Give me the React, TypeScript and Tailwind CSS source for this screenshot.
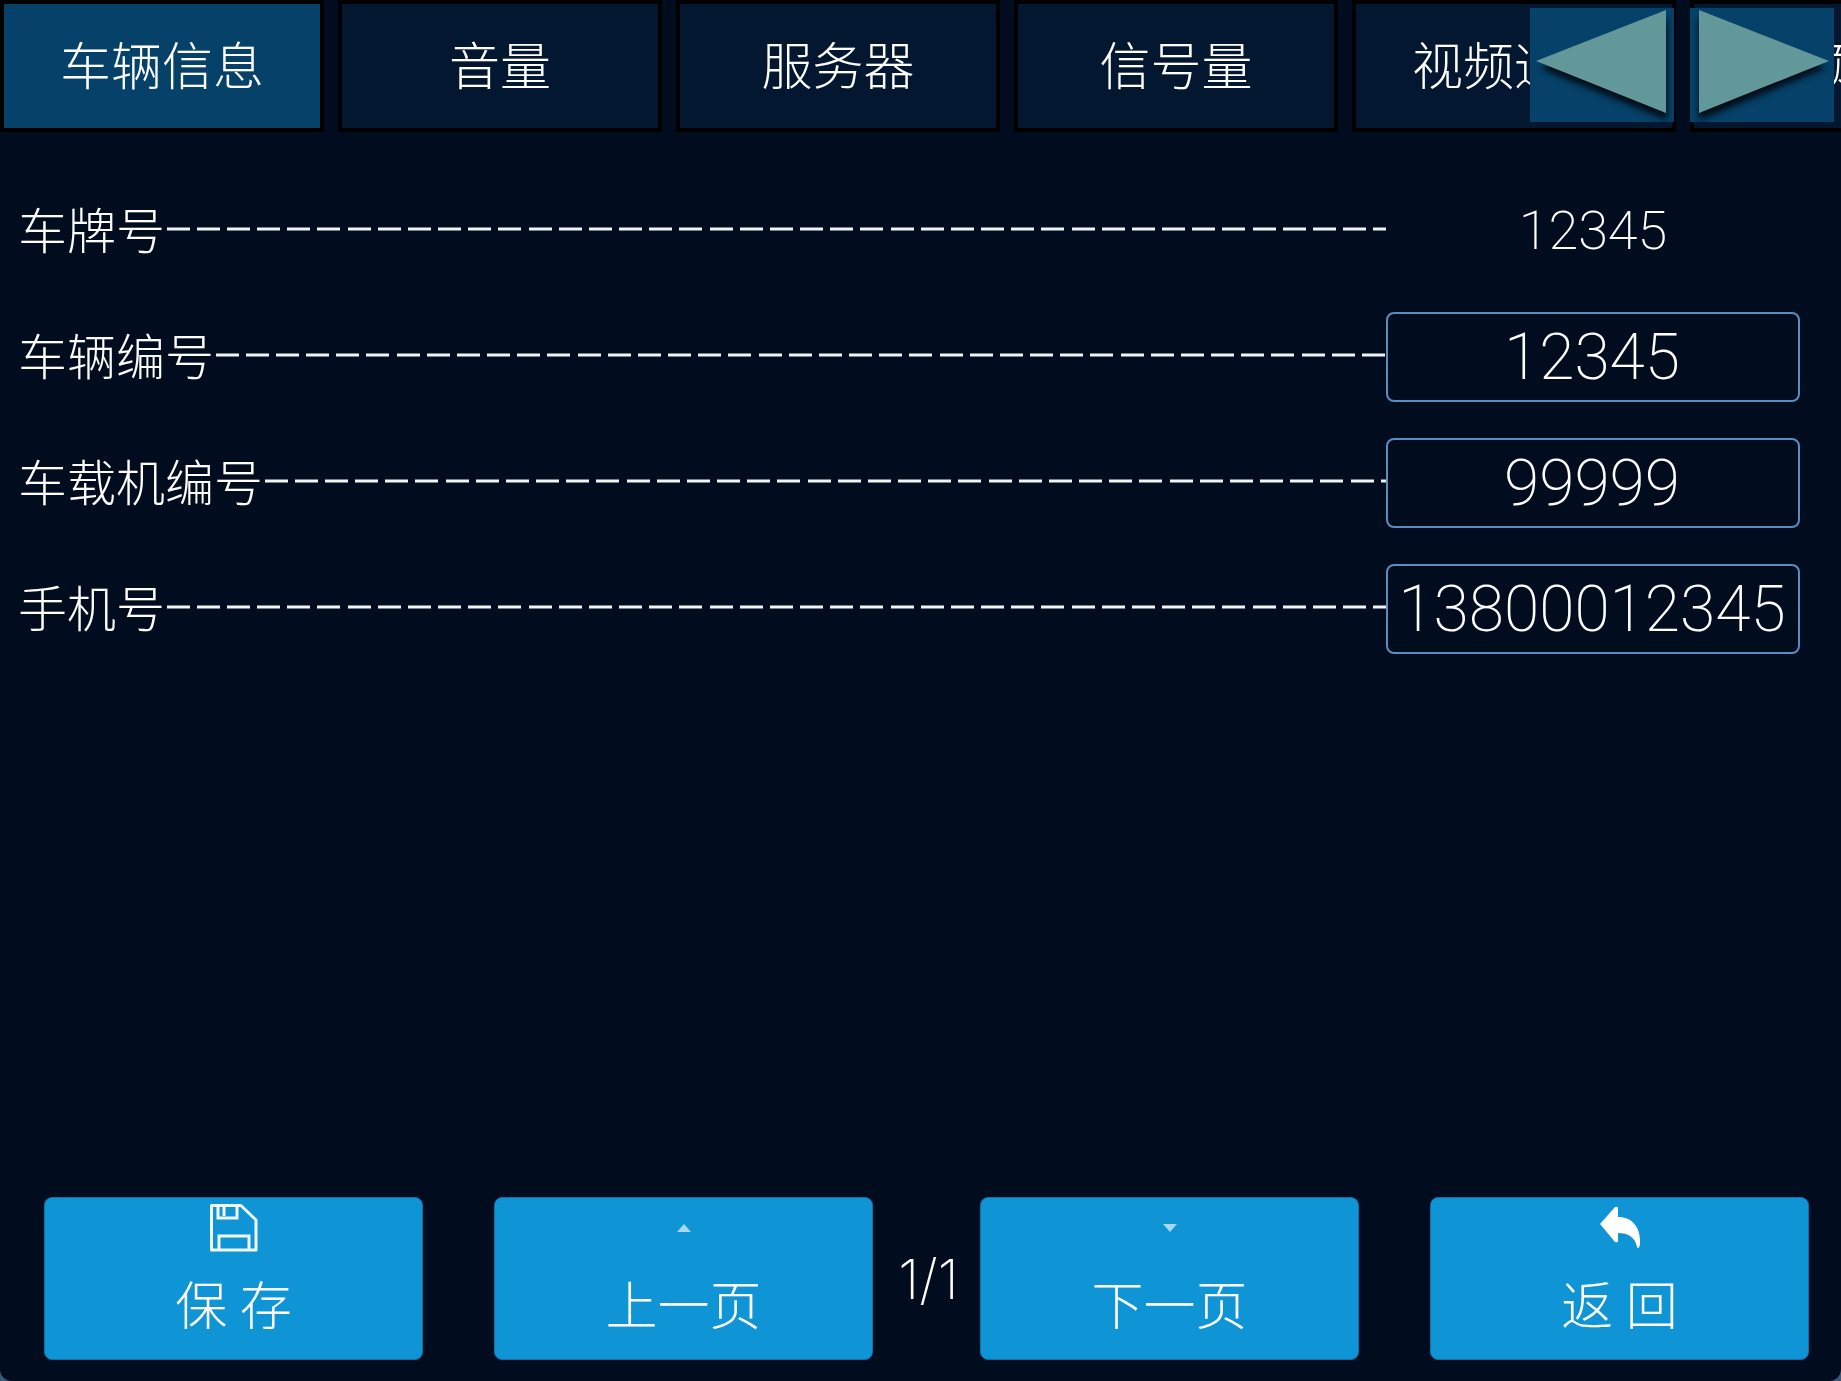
const TABS = ["车辆信息", "音量", "服务器", "信号量", "视频通道", "视频预览"];

const FIELDS = [
  { id: "plate", label: "车牌号", value: "12345", editable: false },
  { id: "vehicle-no", label: "车辆编号", value: "12345", editable: true },
  { id: "device-no", label: "车载机编号", value: "99999", editable: true },
  { id: "phone", label: "手机号", value: "13800012345", editable: true },
];

function ArrowLeft() {
  return (
    <svg viewBox="0 0 144 114" className="block h-full w-full" aria-hidden="true">
      <polygon points="10,60 137,11 137,112" fill="#010c16" className="blur-[3px]" />
      <polygon points="6,53 136,2 136,105" fill="#629899" />
    </svg>
  );
}

function ArrowRight() {
  return (
    <svg viewBox="0 0 144 114" className="block h-full w-full" aria-hidden="true">
      <polygon points="136,60 9,11 9,112" fill="#010c16" className="blur-[3px]" />
      <polygon points="139,53 9,2 9,105" fill="#629899" />
    </svg>
  );
}

function SaveIcon() {
  return (
    <svg viewBox="0 0 48 48" className="h-12 w-12" fill="none" stroke="#f2faff" aria-hidden="true">
      <path d="M1.500 1.500H31L46 16V46H1.500Z" strokeWidth="3" strokeLinejoin="round" />
      <path d="M8 2V14H27V2" strokeWidth="3" />
      <path d="M14 2V12" strokeWidth="3" />
      <path d="M9 46V32H39V46" strokeWidth="3" />
    </svg>
  );
}

function UpIcon() {
  return (
    <svg viewBox="0 0 48 48" className="h-12 w-12" aria-hidden="true">
      <path d="M24 20L31 28H17Z" fill="#a9d8f2" />
    </svg>
  );
}

function DownIcon() {
  return (
    <svg viewBox="0 0 48 48" className="h-12 w-12" aria-hidden="true">
      <path d="M17 20H31L24 28Z" fill="#a9d8f2" />
    </svg>
  );
}

function BackIcon() {
  return (
    <svg viewBox="0 0 48 48" className="h-12 w-12" aria-hidden="true">
      <path
        d="M4 20L19 3Q22 2 22 4V13C36 13 45 23 44 40Q43 46 41 43C39 33 32 29 22 29V37Q22 39 19 38Z"
        fill="#fff"
      />
    </svg>
  );
}

function FooterButton({ icon, text }: { icon: React.ReactNode; text: string }) {
  return (
    <button
      type="button"
      className="flex h-[163px] flex-1 flex-col items-center gap-6 rounded-lg border border-[#0b6fa8] bg-[#0f94d6] pt-1.5 text-[52px] leading-[64px] whitespace-pre"
    >
      {icon}
      <span>{text}</span>
    </button>
  );
}

export default function App() {
  return (
    <div className="min-h-screen bg-[#3a5878]">
      <div className="relative flex min-h-screen flex-col overflow-hidden rounded-b-[12px] bg-[#010d1e] font-[Roboto,'Noto_Sans_CJK_SC',sans-serif] font-extralight text-white">
        <header className="relative overflow-hidden">
          <nav className="flex gap-[14px]">
            {TABS.map((tab, i) => (
              <button
                key={tab}
                type="button"
                className={`h-[132px] w-[324px] shrink-0 border-4 border-black pt-1 text-[51px] leading-[64px] ${
                  i === 0 ? "bg-[#054168]" : "bg-[#031830]"
                }`}
              >
                {tab}
              </button>
            ))}
          </nav>
          <div className="absolute top-2 right-[7px] flex gap-4">
            <button type="button" aria-label="向左" className="h-[114px] w-[144px] bg-[#054168]">
              <ArrowLeft />
            </button>
            <button type="button" aria-label="向右" className="h-[114px] w-[144px] bg-[#054168]">
              <ArrowRight />
            </button>
          </div>
        </header>

        <main className="flex-1 pt-9 pr-[41px] pl-[18px]">
          {FIELDS.map((f) => (
            <div key={f.id} className="flex h-[126px] items-center">
              <label htmlFor={f.id} className="pt-1 text-[49px] leading-[64px]">
                {f.label}
              </label>
              <svg className="h-2 min-w-0 flex-1" aria-hidden="true">
                <line
                  x1="2"
                  y1="2"
                  x2="100%"
                  y2="2"
                  stroke="#f0f4f4"
                  strokeWidth="3"
                  strokeDasharray="23 7 23 7 23 7 23 7 23 7 23 8"
                />
              </svg>
              {f.editable ? (
                <input
                  id={f.id}
                  type="text"
                  defaultValue={f.value}
                  className="h-[90px] w-[414px] rounded-lg border-2 border-[#5b8cc0] bg-transparent pr-0.5 text-center text-[64px] leading-[80px] outline-none"
                />
              ) : (
                <output id={f.id} className="w-[414px] text-center text-[54px] leading-[80px]">
                  {f.value}
                </output>
              )}
            </div>
          ))}
        </main>

        <footer className="flex items-center pr-8 pb-[21px] pl-[44px]">
          <FooterButton icon={<SaveIcon />} text="保 存" />
          <span className="w-[71px]" />
          <FooterButton icon={<UpIcon />} text="上一页" />
          <span className="w-[107px] pl-1 text-center font-[Inter,sans-serif] text-[55px] leading-[64px]">1/1</span>
          <FooterButton icon={<DownIcon />} text="下一页" />
          <span className="w-[71px]" />
          <FooterButton icon={<BackIcon />} text="返 回" />
        </footer>
      </div>
    </div>
  );
}
